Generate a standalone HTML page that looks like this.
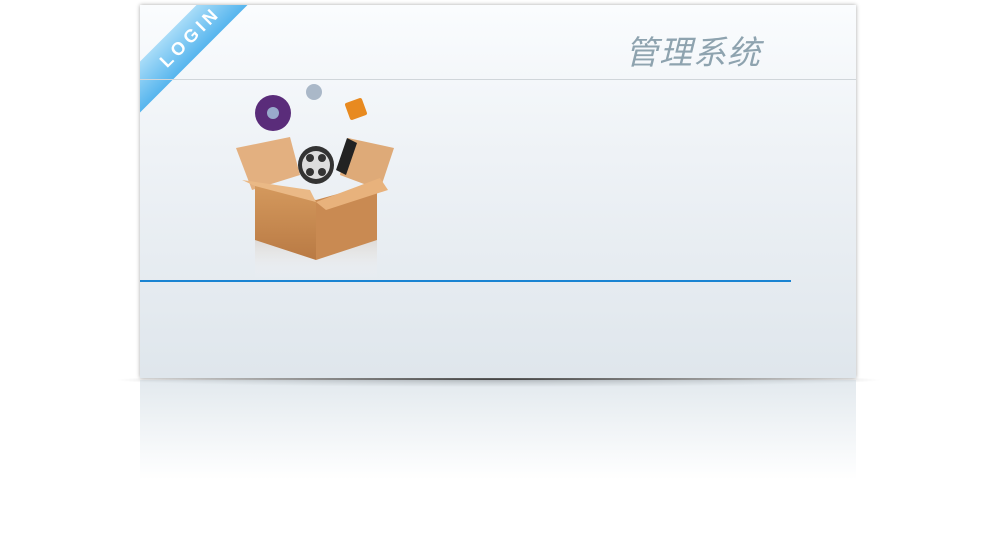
<!DOCTYPE html>
<html><head><meta charset="utf-8"><style>
body{margin:0;width:997px;height:534px;background:#fff;position:relative;overflow:hidden;font-family:"Liberation Sans","Noto Sans CJK SC",sans-serif}
.panel{position:absolute;left:140px;top:5px;width:716px;height:373px;background:linear-gradient(#fafcfe,#eef2f6 40%,#dfe6ec);box-shadow:0 0 4px rgba(0,0,0,.35);overflow:hidden}
.hl{position:absolute;left:0;top:74px;width:716px;height:1px;background:#d0d6da}
.bl{position:absolute;left:0;top:275px;width:651px;height:2px;background:#1a84d2}
.title{position:absolute;left:485px;top:21px;font-size:33px;font-style:italic;color:#8ea3af;letter-spacing:1px}
.rib{position:absolute;left:-50px;top:14px;width:200px;height:36px;background:linear-gradient(#a8dcf8,#56b5ee);transform:rotate(-45deg);color:#fff;font-size:18px;letter-spacing:4px;text-align:center;line-height:36px;font-weight:bold}
.shadow{position:absolute;left:112px;top:373px;width:773px;height:14px;border-radius:50%;background:radial-gradient(ellipse at center,rgba(0,0,0,.75),rgba(0,0,0,0) 70%)}
.refl{position:absolute;left:140px;top:380px;width:716px;height:100px;background:linear-gradient(rgba(220,228,234,.8),rgba(255,255,255,0))}
</style></head><body>
<div class="shadow"></div>
<div class="refl"></div>
<div class="panel">
<div class="rib">LOGIN</div>
<div class="hl"></div>
<div class="title">管理系统</div>
<svg style="position:absolute;left:90px;top:75px" width="180" height="200">
<defs><linearGradient id="g" x1="0" y1="0" x2="0" y2="1"><stop offset="0" stop-color="#d59a5e"/><stop offset="1" stop-color="#b97a44"/></linearGradient>
<linearGradient id="r" x1="0" y1="0" x2="0" y2="1"><stop offset="0" stop-color="#c9b7a6" stop-opacity=".6"/><stop offset="1" stop-color="#fff" stop-opacity="0"/></linearGradient></defs>
<rect x="25" y="150" width="122" height="50" fill="url(#r)"/>
<polygon points="6,68 60,57 70,95 22,110" fill="#e3b080"/>
<polygon points="118,58 164,68 150,110 110,95" fill="#deaa78"/>
<ellipse cx="86" cy="85" rx="18" ry="19" fill="#333"/><circle cx="86" cy="85" r="14" fill="#ddd"/>
<circle cx="80" cy="78" r="4" fill="#333"/><circle cx="92" cy="78" r="4" fill="#333"/><circle cx="80" cy="92" r="4" fill="#333"/><circle cx="92" cy="92" r="4" fill="#333"/>
<polygon points="117,58 127,63 116,95 106,90" fill="#222"/>
<polygon points="25,103 86,120 86,180 25,160" fill="url(#g)"/>
<polygon points="86,120 147,103 147,160 86,180" fill="#c98a52"/>
<polygon points="12,100 80,110 86,122 25,106" fill="#eab986"/>
<polygon points="86,122 150,98 158,110 96,130" fill="#e8b27c"/>
<circle cx="43" cy="33" r="18" fill="#5a2c7a"/><circle cx="43" cy="33" r="6" fill="#9ac"/>
<circle cx="84" cy="12" r="8" fill="#aab8c8"/>
<rect x="117" y="20" width="18" height="18" rx="2" fill="#e88a20" transform="rotate(-20 126 29)"/>
</svg>
<div class="bl"></div>
</div>
</body></html>
